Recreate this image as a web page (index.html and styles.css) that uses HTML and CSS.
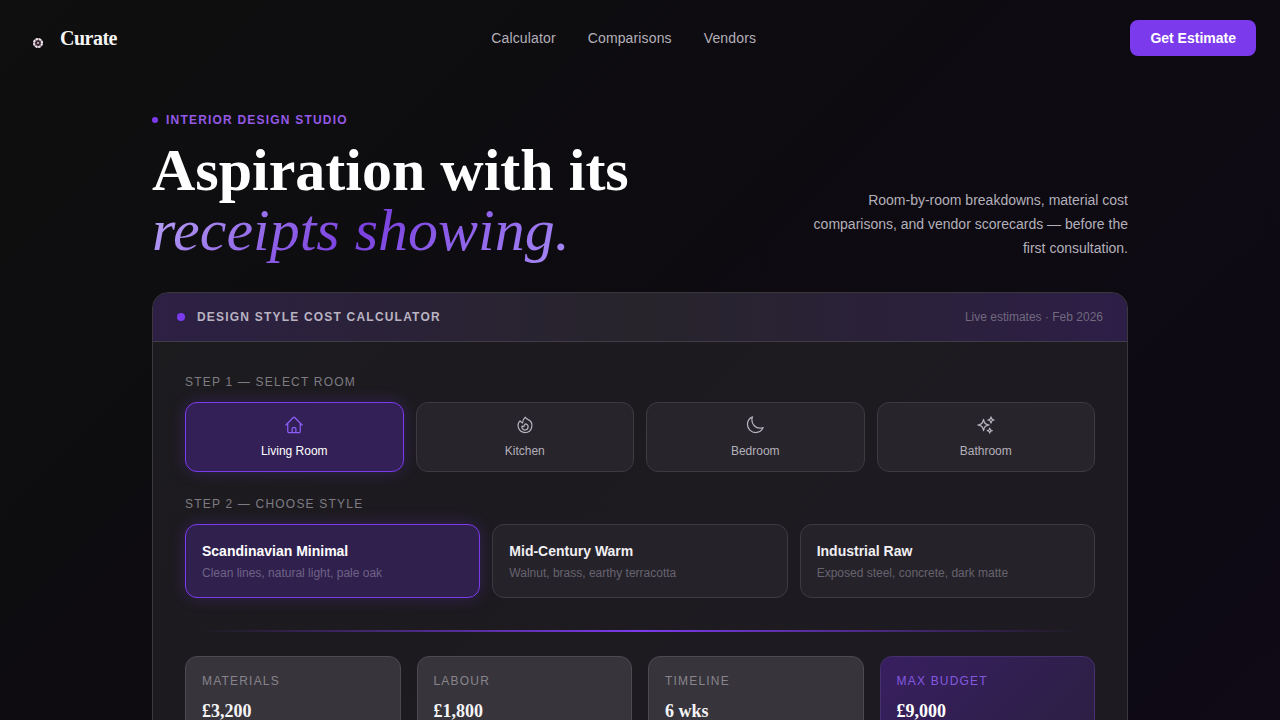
FILE: index.html
```html
<!DOCTYPE html>
<html lang="en">
<head>
  <meta charset="UTF-8">
  <meta name="viewport" content="width=device-width, initial-scale=1.0">
  <title>Curate</title>
  <link rel="stylesheet" href="styles.css">
</head>
<body>

  <header class="site-header">
    <a href="#" class="logo">
      <svg class="logo-mark" viewBox="0 0 28 28" fill="none" aria-hidden="true">
        <circle cx="14" cy="19" r="4" fill="#3a2a34" stroke="#8d7f88" stroke-width="2"/>
        <circle cx="14" cy="19" r="4" stroke="#f0e6ec" stroke-width="2" stroke-dasharray="2.1 1.04" stroke-dashoffset="-0.5"/>
        <circle cx="14" cy="19" r="1" fill="#d8c4cc"/>
      </svg>
      <span class="logo-text">Curate</span>
    </a>
    <nav class="nav">
      <a href="#calculator">Calculator</a>
      <a href="#comparisons">Comparisons</a>
      <a href="#vendors">Vendors</a>
    </nav>
    <button class="cta-btn" type="button">Get Estimate</button>
  </header>

  <main class="container">
    <section class="hero">
      <div>
        <p class="eyebrow">Interior Design Studio</p>
        <h1>Aspiration with its<br><em>receipts showing.</em></h1>
      </div>
      <p class="hero-text">Room-by-room breakdowns, material cost comparisons, and vendor scorecards — before the first consultation.</p>
    </section>

    <section class="calculator" id="calculator">
      <div class="calc-header">
        <h2>Design Style Cost Calculator</h2>
        <span class="calc-note">Live estimates · Feb 2026</span>
      </div>

      <div class="calc-body">
        <h3 class="label">Step 1 — Select Room</h3>
        <div class="rooms">
          <button class="option room active" type="button">
            <svg viewBox="0 0 24 24"><path d="m2.25 12 8.954-8.955c.44-.439 1.152-.439 1.591 0L21.75 12M4.5 9.75v10.125c0 .621.504 1.125 1.125 1.125H9.75v-4.875c0-.621.504-1.125 1.125-1.125h2.25c.621 0 1.125.504 1.125 1.125V21h4.125c.621 0 1.125-.504 1.125-1.125V9.75M8.25 21h8.25"/></svg>
            <span>Living Room</span>
          </button>
          <button class="option room" type="button">
            <svg viewBox="0 0 24 24"><path d="M15.362 5.214A8.252 8.252 0 0 1 12 21 8.25 8.25 0 0 1 6.038 7.047 8.287 8.287 0 0 0 9 9.601a8.983 8.983 0 0 1 3.361-6.867 8.21 8.21 0 0 0 3 2.48Z"/><path d="M12 18a3.75 3.75 0 0 0 .495-7.468 5.99 5.99 0 0 0-1.925 3.547 5.975 5.975 0 0 1-2.133-1.001A3.75 3.75 0 0 0 12 18Z"/></svg>
            <span>Kitchen</span>
          </button>
          <button class="option room" type="button">
            <svg viewBox="0 0 24 24"><path d="M21.752 15.002A9.718 9.718 0 0 1 18 15.75c-5.385 0-9.75-4.365-9.75-9.75 0-1.33.266-2.597.748-3.752A9.753 9.753 0 0 0 3 11.25C3 16.635 7.365 21 12.75 21a9.753 9.753 0 0 0 9.002-5.998Z"/></svg>
            <span>Bedroom</span>
          </button>
          <button class="option room" type="button">
            <svg viewBox="0 0 24 24"><path d="M9.813 15.904 9 18.75l-.813-2.846a4.5 4.5 0 0 0-3.09-3.09L2.25 12l2.846-.813a4.5 4.5 0 0 0 3.09-3.09L9 5.25l.813 2.846a4.5 4.5 0 0 0 3.09 3.09L15.75 12l-2.846.813a4.5 4.5 0 0 0-3.09 3.09ZM18.259 8.715 18 9.75l-.259-1.035a3.375 3.375 0 0 0-2.455-2.456L14.25 6l1.036-.259a3.375 3.375 0 0 0 2.455-2.456L18 2.25l.259 1.035a3.375 3.375 0 0 0 2.456 2.456L21.75 6l-1.035.259a3.375 3.375 0 0 0-2.456 2.456ZM16.894 20.567 16.5 21.75l-.394-1.183a2.25 2.25 0 0 0-1.423-1.423L13.5 18.75l1.183-.394a2.25 2.25 0 0 0 1.423-1.423l.394-1.183.394 1.183a2.25 2.25 0 0 0 1.423 1.423l1.183.394-1.183.394a2.25 2.25 0 0 0-1.423 1.423Z"/></svg>
            <span>Bathroom</span>
          </button>
        </div>

        <h3 class="label">Step 2 — Choose Style</h3>
        <div class="styles">
          <button class="option style active" type="button">
            <strong>Scandinavian Minimal</strong>
            <span>Clean lines, natural light, pale oak</span>
          </button>
          <button class="option style" type="button">
            <strong>Mid-Century Warm</strong>
            <span>Walnut, brass, earthy terracotta</span>
          </button>
          <button class="option style" type="button">
            <strong>Industrial Raw</strong>
            <span>Exposed steel, concrete, dark matte</span>
          </button>
        </div>

        <div class="divider"></div>

        <div class="results">
          <div class="result">
            <p class="result-label">Materials</p>
            <p class="result-value">£3,200</p>
          </div>
          <div class="result">
            <p class="result-label">Labour</p>
            <p class="result-value">£1,800</p>
          </div>
          <div class="result">
            <p class="result-label">Timeline</p>
            <p class="result-value">6 wks</p>
          </div>
          <div class="result highlight">
            <p class="result-label">Max Budget</p>
            <p class="result-value">£9,000</p>
          </div>
        </div>
      </div>
    </section>
  </main>

  <script>
    // one active option per group
    document.querySelectorAll('.rooms, .styles').forEach(group => {
      group.addEventListener('click', e => {
        const option = e.target.closest('.option');
        if (!option) return;
        group.querySelector('.active').classList.remove('active');
        option.classList.add('active');
      });
    });
  </script>
</body>
</html>
```
FILE: styles.css
```css
* {
  box-sizing: border-box;
  margin: 0;
  padding: 0;
}

body {
  min-height: 100vh;
  font-family: "Liberation Sans", Arial, sans-serif;
  font-size: 14px;
  color: #fff;
  background: linear-gradient(135deg, #0f0f0f 0%, #0d0b10 45%, #0e0916 100%);
}

button {
  font-family: inherit;
  cursor: pointer;
}

/* header */
.site-header {
  display: flex;
  align-items: center;
  justify-content: space-between;
  padding: 20px 24px;
}

.logo {
  display: flex;
  align-items: center;
  gap: 8px;
  color: #f5f5f5;
  text-decoration: none;
}

.logo-mark {
  width: 28px;
  height: 28px;
}

.logo-text {
  font-family: "Liberation Serif", "Times New Roman", serif;
  font-size: 20px;
  font-weight: bold;
  letter-spacing: -0.025em;
}

.nav {
  display: flex;
  gap: 32px;
}

.nav a {
  color: #b4b0ba;
  text-decoration: none;
  letter-spacing: 0.01em;
}

.nav a:hover {
  color: #fff;
}

.cta-btn {
  height: 36px;
  padding: 0 20px;
  border: none;
  border-radius: 8px;
  background: #7c3aed;
  color: #fff;
  font-size: 14px;
  font-weight: bold;
}

/* hero */
.container {
  max-width: 1024px;
  margin: 0 auto;
  padding: 36px 24px 48px;
}

.hero {
  display: flex;
  align-items: flex-end;
  justify-content: space-between;
  margin-bottom: 32px;
}

.eyebrow {
  display: flex;
  align-items: center;
  gap: 8px;
  margin-bottom: 12px;
  font-size: 12px;
  line-height: 16px;
  font-weight: bold;
  letter-spacing: 0.1em;
  text-transform: uppercase;
  color: #9459e6;
}

.eyebrow::before {
  content: "";
  width: 6px;
  height: 6px;
  border-radius: 50%;
  background: #7c3aed;
}

h1 {
  font-family: "Liberation Serif", "Times New Roman", serif;
  font-size: 60px;
  line-height: 60px;
  font-weight: bold;
}

h1 em {
  font-weight: normal;
  background: linear-gradient(135deg, #bba8f5 0%, #7a40e0 50%, #a78bf5 100%);
  -webkit-background-clip: text;
  background-clip: text;
  color: transparent;
}

.hero-text {
  max-width: 320px;
  line-height: 24px;
  text-align: right;
  color: #b4b0ba;
}

/* calculator */
.calculator {
  border: 1px solid #3a383d;
  border-radius: 16px;
  background: linear-gradient(135deg, #1c1b1e, #1e1a22);
  overflow: hidden;
}

.calc-header {
  display: flex;
  align-items: center;
  justify-content: space-between;
  padding: 16px 24px;
  border-bottom: 1px solid #403c48;
  background: linear-gradient(90deg, #2d2044 0%, #27242b 50%, #2d1e47 100%);
}

.calc-header h2 {
  display: flex;
  align-items: center;
  gap: 12px;
  font-size: 12px;
  line-height: 16px;
  letter-spacing: 0.1em;
  text-transform: uppercase;
  color: #b9b3c2;
}

.calc-header h2::before {
  content: "";
  width: 8px;
  height: 8px;
  border-radius: 50%;
  background: #7c3aed;
}

.calc-note {
  font-size: 12px;
  line-height: 16px;
  color: #71697f;
}

.calc-body {
  padding: 32px;
}

.label {
  margin-bottom: 12px;
  font-size: 12px;
  line-height: 16px;
  font-weight: normal;
  letter-spacing: 0.1em;
  text-transform: uppercase;
  color: #7e7b84;
}

.rooms,
.styles {
  display: grid;
  gap: 12px;
}

.rooms {
  grid-template-columns: repeat(4, 1fr);
  margin-bottom: 24px;
}

.styles {
  grid-template-columns: repeat(3, 1fr);
}

.option {
  display: flex;
  flex-direction: column;
  border: 1px solid #3d3b40;
  border-radius: 12px;
  background: #27242b;
  color: #b4b0ba;
  font-size: 12px;
  line-height: 16px;
}

.option.active {
  border-color: #7c3aed;
  background: #332056;
  box-shadow: 0 0 16px rgba(124, 58, 237, 0.25);
}

.room {
  align-items: center;
  gap: 8px;
  padding: 12px;
}

.room svg {
  width: 20px;
  height: 20px;
  fill: none;
  stroke: currentColor;
  stroke-width: 1.5;
  stroke-linecap: round;
  stroke-linejoin: round;
}

.room.active {
  color: #fff;
}

.room.active svg {
  stroke: #8b5cf6;
}

.style {
  gap: 4px;
  padding: 16px;
  text-align: left;
  background: #25222a;
}

.style strong {
  font-size: 14px;
  line-height: 20px;
  color: #f0eff2;
}

.style span {
  color: #67636e;
}

.style.active {
  background: #30204e;
}

.style.active strong {
  color: #fff;
}

.style.active span {
  color: #6f6285;
}

.divider {
  height: 2px;
  margin: 32px 16px 24px;
  background: linear-gradient(90deg, transparent, #7c3aed, transparent);
}

.results {
  display: grid;
  grid-template-columns: repeat(4, 1fr);
  gap: 16px;
}

.result {
  padding: 16px;
  border: 1px solid #4c4a50;
  border-radius: 12px;
  background: #38343c;
}

.result-label {
  margin-bottom: 8px;
  font-size: 12px;
  line-height: 16px;
  letter-spacing: 0.1em;
  text-transform: uppercase;
  color: #87848b;
}

.result-value {
  font-family: "Liberation Serif", "Times New Roman", serif;
  font-size: 18px;
  line-height: 28px;
  font-weight: bold;
  color: #f5f4f7;
}

.result.highlight {
  border-color: #453070;
  background: linear-gradient(135deg, #381f60, #2b1f42);
}

.highlight .result-label {
  color: #8459e0;
}

.highlight .result-value {
  color: #fff;
}
```
